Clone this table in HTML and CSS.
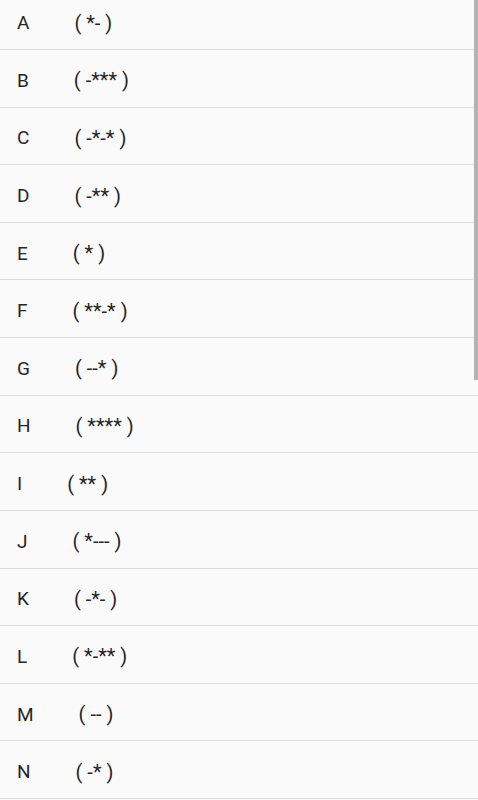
FILE: index.html
```html
<!DOCTYPE html>
<html>
<head>
<meta charset="utf-8">
<link rel="stylesheet" href="styles.css">
</head>
<body>
<div class="screen">
  <ul class="list">
    <li class="row"><span class="letter">A</span><span class="code">( *- )</span></li>
    <li class="row"><span class="letter">B</span><span class="code">( -*** )</span></li>
    <li class="row"><span class="letter">C</span><span class="code">( -*-* )</span></li>
    <li class="row"><span class="letter">D</span><span class="code">( -** )</span></li>
    <li class="row"><span class="letter">E</span><span class="code">( * )</span></li>
    <li class="row"><span class="letter">F</span><span class="code">( **-* )</span></li>
    <li class="row"><span class="letter">G</span><span class="code">( --* )</span></li>
    <li class="row"><span class="letter">H</span><span class="code">( **** )</span></li>
    <li class="row"><span class="letter">I</span><span class="code">( ** )</span></li>
    <li class="row"><span class="letter">J</span><span class="code">( *--- )</span></li>
    <li class="row"><span class="letter">K</span><span class="code">( -*- )</span></li>
    <li class="row"><span class="letter">L</span><span class="code">( *-** )</span></li>
    <li class="row"><span class="letter">M</span><span class="code">( -- )</span></li>
    <li class="row"><span class="letter">N</span><span class="code">( -* )</span></li>
  </ul>
  <div class="scrollbar"></div>
</div>
</body>
</html>
```

FILE: styles.css
```css
html, body {
  margin: 0;
  padding: 0;
  background: #fafafa;
}
.screen {
  position: relative;
  width: 478px;
  height: 800px;
  overflow: hidden;
  background: #fafafa;
  font-family: Roboto, "Noto Sans", sans-serif;
  color: #262626;
}
.list {
  list-style: none;
  margin: -7.6px 0 0 0;
  padding: 0;
}
.row {
  box-sizing: border-box;
  height: 57.615px;
  border-bottom: 1px solid #dadada;
  display: flex;
  align-items: center;
  padding-left: 17px;
  padding-top: 4px;
  font-size: 19px;
}
.letter {
  margin-right: 45px;
}
.code {
  white-space: pre;
  font-size: 20px;
}
.scrollbar {
  position: absolute;
  top: 0;
  right: 0;
  width: 4px;
  height: 380px;
  background: #b3b3b3;
}
```
